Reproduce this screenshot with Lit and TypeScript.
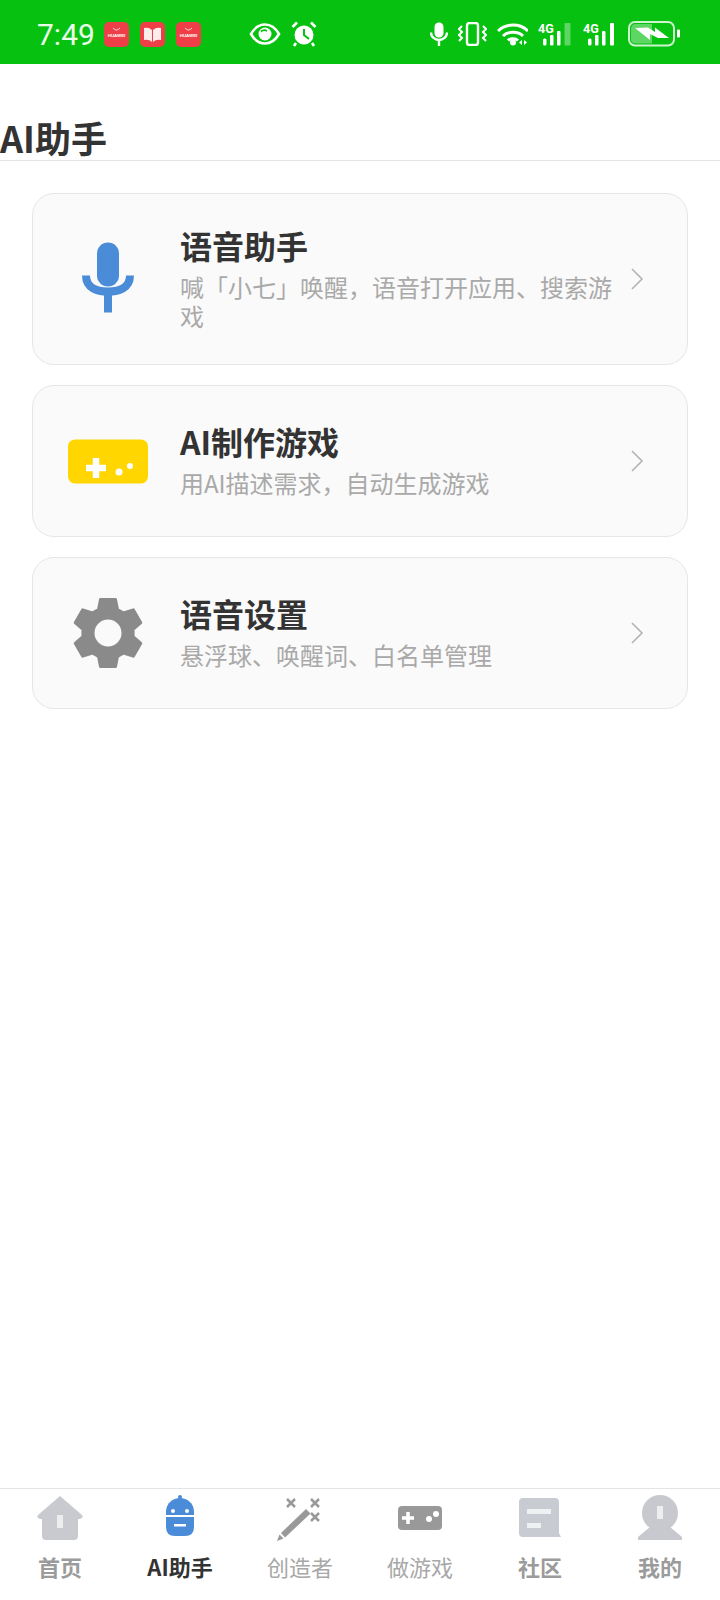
import { LitElement, html, css } from 'lit';
import { customElement } from 'lit/decorators.js';

// six teeth, flat ones at top and bottom
function gearPath(cx: number, cy: number) {
  const pts: string[] = [];
  for (let i = 0; i < 6; i++) {
    const a = (Math.PI / 3) * i - Math.PI / 2;
    const at = (r: number, off: number) => {
      const x = cx + r * Math.cos(a) - off * Math.sin(a);
      const y = cy + r * Math.sin(a) + off * Math.cos(a);
      return `${x.toFixed(1)} ${y.toFixed(1)}`;
    };
    pts.push(at(23.5, -9.5), at(33.5, -7.5), at(33.5, 7.5), at(23.5, 9.5));
  }
  return 'M' + pts.join('L') + 'Z';
}

const micIcon = html`<svg class="card-icon" viewBox="0 0 80 80">
  <rect x="29" y="3.5" width="22" height="44" rx="11" fill="#4a8cd8"></rect>
  <path d="M18 36.500C18 49 29 52.500 40 52.500C51 52.500 62 49 62 36.500" fill="none" stroke="#4a8cd8" stroke-width="8"></path>
  <rect x="36" y="54" width="8" height="19.500" fill="#4a8cd8"></rect>
</svg>`;

const padIcon = html`<svg class="card-icon" viewBox="0 0 80 80">
  <rect x="0" y="18.500" width="80" height="44" rx="7" fill="#ffd600"></rect>
  <path d="M18 47H38M28 37V57" stroke="#fff" stroke-width="6.500" fill="none"></path>
  <circle cx="51" cy="51" r="3.500" fill="#fff"></circle>
  <circle cx="62" cy="45" r="3" fill="#fff"></circle>
</svg>`;

const gearIcon = html`<svg class="card-icon" viewBox="0 0 80 80">
  <path d=${gearPath(40, 40)} fill="#8a8a8a" stroke="#8a8a8a" stroke-width="3" stroke-linejoin="round"></path>
  <circle cx="40" cy="40" r="13.500" fill="#fafafa"></circle>
</svg>`;

const chevron = html`<svg class="chevron" viewBox="0 0 14 24">
  <path d="M2 2L12 12L2 22" fill="none" stroke="#b4b4b4" stroke-width="1.600"></path>
</svg>`;

const navIcons = {
  home: html`<svg class="nav-icon" viewBox="0 0 48 48">
    <path d="M24 2L46 21Q48 24 44 25H42V42Q42 46 38 46H10Q6 46 6 42V25H4Q0 24 2 21Z" fill="#c8cacf"></path>
    <rect x="21" y="21" width="6" height="13" fill="#eceded"></rect>
  </svg>`,
  robot: html`<svg class="nav-icon" viewBox="0 0 48 48">
    <circle cx="24" cy="3" r="2" fill="#4a8cd8"></circle>
    <path d="M10 21V18C10 9 17 4 24 4C31 4 38 9 38 18V21Z" fill="#4a8cd8"></path>
    <path d="M10 23H38V33Q38 42 29 42H19Q10 42 10 33Z" fill="#4a8cd8"></path>
    <circle cx="17" cy="17" r="2" fill="#fff"></circle>
    <circle cx="31" cy="17" r="2" fill="#fff"></circle>
    <rect x="18" y="30" width="12" height="2.500" fill="#fff"></rect>
  </svg>`,
  wand: html`<svg class="nav-icon" viewBox="0 0 48 48">
    <path d="M1 47L3.500 40.500L7.500 44.500Z" fill="#999"></path>
    <path d="M5 39L30 15L34.500 19.500L9 43.500Z" fill="#999"></path>
    <path d="M11 5L19 13M19 5L11 13M35 5L43 13M43 5L35 13M35 19L43 27M43 19L35 27" stroke="#999" stroke-width="2.500" fill="none"></path>
  </svg>`,
  pad: html`<svg class="nav-icon" viewBox="0 0 48 48">
    <rect x="2" y="12" width="44" height="24" rx="4" fill="#999"></rect>
    <path d="M6 24H18M12 18V30" stroke="#fff" stroke-width="3.500" fill="none"></path>
    <circle cx="33" cy="25" r="3" fill="#fff"></circle>
    <circle cx="40" cy="20" r="3" fill="#fff"></circle>
  </svg>`,
  community: html`<svg class="nav-icon" viewBox="0 0 48 48">
    <path d="M7 4H39Q43 4 43 8V39L45 43H7Q3 43 3 39V8Q3 4 7 4Z" fill="#c8ccd2"></path>
    <rect x="11" y="15" width="24" height="5" fill="#eef0f2"></rect>
    <rect x="11" y="29" width="14" height="5" fill="#eef0f2"></rect>
  </svg>`,
  me: html`<svg class="nav-icon" viewBox="0 0 48 48">
    <circle cx="24" cy="19" r="18" fill="#c8c9ce"></circle>
    <path d="M14 33H34L46 43V46H2V43Z" fill="#c8c9ce"></path>
    <rect x="21" y="12" width="6" height="13" fill="#eeeef0"></rect>
  </svg>`,
};

const cards = [
  { icon: micIcon, title: '语音助手', sub: '喊「小七」唤醒，语音打开应用、搜索游戏', tall: true },
  { icon: padIcon, title: 'AI制作游戏', sub: '用AI描述需求，自动生成游戏', tall: false },
  { icon: gearIcon, title: '语音设置', sub: '悬浮球、唤醒词、白名单管理', tall: false },
];

const tabs = [
  { icon: navIcons.home, label: '首页', kind: 'strong' },
  { icon: navIcons.robot, label: 'AI助手', kind: 'active' },
  { icon: navIcons.wand, label: '创造者', kind: '' },
  { icon: navIcons.pad, label: '做游戏', kind: '' },
  { icon: navIcons.community, label: '社区', kind: 'strong' },
  { icon: navIcons.me, label: '我的', kind: 'strong' },
];

@customElement('app-root')
export class AppRoot extends LitElement {
  static styles = css`
    :host {
      display: flex;
      flex-direction: column;
      height: 1600px;
      background: #fff;
      font-family: 'Noto Sans CJK SC', 'Noto Sans', sans-serif;
      color: #333;
    }

    .status {
      height: 64px;
      box-sizing: border-box;
      padding: 4px 0 0 37px;
      background: #07c110;
      display: flex;
      align-items: center;
      color: #eafde9;
    }
    .time {
      font-family: Roboto, sans-serif;
      font-size: 30px;
      width: 67px;
    }
    .tile {
      width: 25px;
      height: 25px;
      margin-right: 11px;
      border-radius: 5px;
      background: #ee3f48;
      display: block;
    }
    .eye { margin-left: 37px; width: 32px; height: 24px; }
    .alarm { margin-left: 10px; width: 26px; height: 26px; }
    .mic { margin-left: 113px; width: 18px; height: 24px; }
    .vibrate { margin-left: 10px; width: 29px; height: 24px; }
    .wifi { margin-left: 10px; width: 31px; height: 24px; }
    .sim { margin-left: 10px; width: 35px; height: 24px; }
    .battery { margin-left: 10px; width: 52px; height: 26px; }

    .header {
      height: 97px;
      box-sizing: border-box;
      border-bottom: 1px solid #e4e4e6;
      display: flex;
      align-items: flex-end;
      font-size: 36px;
      font-weight: 700;
      line-height: 44px;
      padding-bottom: 1px;
    }

    .list {
      flex: 1;
      display: flex;
      flex-direction: column;
      gap: 20px;
      padding: 32px 32px 0 32px;
    }
    .card {
      height: 152px;
      box-sizing: border-box;
      border: 1px solid #e6e6e8;
      border-radius: 22px;
      background: #fafafa;
      display: flex;
      align-items: center;
      padding: 0 43px 0 35px;
    }
    .card.tall { height: 172px; }
    .card-icon { width: 80px; height: 80px; flex: none; }
    .text {
      flex: 1;
      min-width: 0;
      margin-left: 32px;
      padding-bottom: 2px;
    }
    .title {
      font-size: 32px;
      font-weight: 700;
      line-height: 38px;
      color: #333;
    }
    .sub {
      margin-top: 9px;
      font-size: 24px;
      line-height: 28.500px;
      color: #a9a9a9;
      text-spacing-trim: space-all;
    }
    .chevron { width: 14px; height: 24px; flex: none; }

    .nav {
      display: grid;
      grid-template-columns: repeat(6, 1fr);
      border-top: 1px solid #e4e4e6;
      padding: 5px 0 19px;
    }
    .tab {
      display: flex;
      flex-direction: column;
      align-items: center;
      gap: 9px;
    }
    .nav-icon { width: 48px; height: 48px; display: block; }
    .label {
      font-size: 22px;
      line-height: 30px;
      color: #a8a8a8;
    }
    .label.strong { color: #9b9b9b; font-weight: 700; }
    .label.active { color: #333; font-weight: 700; }
  `;

  private huaweiTile() {
    return html`<svg class="tile" viewBox="0 0 25 25">
      <path d="M9 6Q12.500 10 16 6" fill="none" stroke="#fff" stroke-width="0.800"></path>
      <text x="12.500" y="15" text-anchor="middle" font-size="4.400" font-family="Liberation Sans, sans-serif" font-weight="700" fill="#fff">HUAWEI</text>
    </svg>`;
  }

  private simIcon(faded: boolean) {
    return html`<svg class="sim" viewBox="0 0 35 24">
      <text x="0" y="10.500" font-size="12.500" font-weight="700" font-family="Roboto, sans-serif" fill="#fff">4G</text>
      <rect x="5" y="16.500" width="3.500" height="7" rx="1.500" fill="#fff"></rect>
      <rect x="12" y="13" width="3.500" height="10.500" rx="1" fill="#fff"></rect>
      <rect x="19" y="9" width="3.500" height="14.500" rx="1" fill="#fff"></rect>
      <rect x=${faded ? 26.5 : 27} y="1" width=${faded ? 6 : 4} height="22.500" rx="1" fill="#fff" opacity=${faded ? 0.35 : 1}></rect>
    </svg>`;
  }

  private statusBar() {
    return html`<div class="status">
      <span class="time">7:49</span>
      ${this.huaweiTile()}
      <svg class="tile" viewBox="0 0 25 25">
        <path d="M4 6Q9 5 12 8V20Q9 17 4 18ZM21 6Q16 5 13 8V20Q16 17 21 18Z" fill="#fff" opacity="0.900"></path>
      </svg>
      ${this.huaweiTile()}
      <svg class="eye" viewBox="0 0 32 24">
        <path d="M2 12C6 5 11 2.500 16 2.500C21 2.500 26 5 30 12C26 19 21 21.500 16 21.500C11 21.500 6 19 2 12Z" fill="none" stroke="#fff" stroke-width="2.600"></path>
        <circle cx="16" cy="12" r="6.500" fill="#fff"></circle>
        <path d="M12 9.500A5 5 0 0 1 18 9" fill="none" stroke="#07c110" stroke-width="1.800"></path>
      </svg>
      <svg class="alarm" viewBox="0 0 26 26">
        <circle cx="13" cy="14" r="9.500" fill="#fff"></circle>
        <path d="M13 8V14L18 18" fill="none" stroke="#07c110" stroke-width="2"></path>
        <path d="M1.500 6L6 1.500M24.500 6L20 1.500M5 22L3 25M21 22L23 25" stroke="#fff" stroke-width="2.600" fill="none"></path>
      </svg>
      <svg class="mic" viewBox="0 0 18 24">
        <rect x="4.500" y="0.500" width="9" height="15" rx="4.500" fill="#fff"></rect>
        <path d="M1 10.500C1 15 5 18 9 18C13 18 17 15 17 10.500M9 18V24" fill="none" stroke="#fff" stroke-width="2.400"></path>
      </svg>
      <svg class="vibrate" viewBox="0 0 29 24">
        <rect x="9" y="1" width="11" height="22" rx="2.500" fill="none" stroke="#fff" stroke-width="2.400"></rect>
        <path d="M4 4L1 7L4 10L1 13L4 16L1 19M25 4L28 7L25 10L28 13L25 16L28 19" fill="none" stroke="#fff" stroke-width="2"></path>
      </svg>
      <svg class="wifi" viewBox="0 0 31 24">
        <path d="M1 9C9 1 23 1 31 9M6 14C11 9 21 9 26 14M11 18.500C13.500 16 18.500 16 21 18.500" fill="none" stroke="#fff" stroke-width="3"></path>
        <circle cx="16" cy="20.500" r="3" fill="#fff"></circle>
        <path d="M25 18L22 20.500L25 23ZM27 18L30 20.500L27 23Z" fill="#fff"></path>
      </svg>
      ${this.simIcon(true)} ${this.simIcon(false)}
      <svg class="battery" viewBox="0 0 52 26">
        <rect x="1" y="1" width="45" height="23.500" rx="6" fill="none" stroke="#fff" stroke-opacity="0.800" stroke-width="2"></rect>
        <path d="M3 8Q3 3 8 3H24V22.500H8Q3 22.500 3 18Z" fill="#fff" opacity="0.350"></path>
        <path d="M7 7L20 6.500L27 11L27 6.500L41 17L30 17L22 13L22 19Z" fill="#fff"></path>
        <rect x="49" y="8.500" width="3" height="8" rx="1" fill="#fff"></rect>
      </svg>
    </div>`;
  }

  render() {
    return html`
      ${this.statusBar()}
      <div class="header">AI助手</div>
      <div class="list">
        ${cards.map(
          (c) => html`<div class="card ${c.tall ? 'tall' : ''}">
            ${c.icon}
            <div class="text">
              <div class="title">${c.title}</div>
              <div class="sub">${c.sub}</div>
            </div>
            ${chevron}
          </div>`,
        )}
      </div>
      <div class="nav">
        ${tabs.map(
          (t) => html`<div class="tab">
            ${t.icon}
            <span class="label ${t.kind}">${t.label}</span>
          </div>`,
        )}
      </div>
    `;
  }
}
